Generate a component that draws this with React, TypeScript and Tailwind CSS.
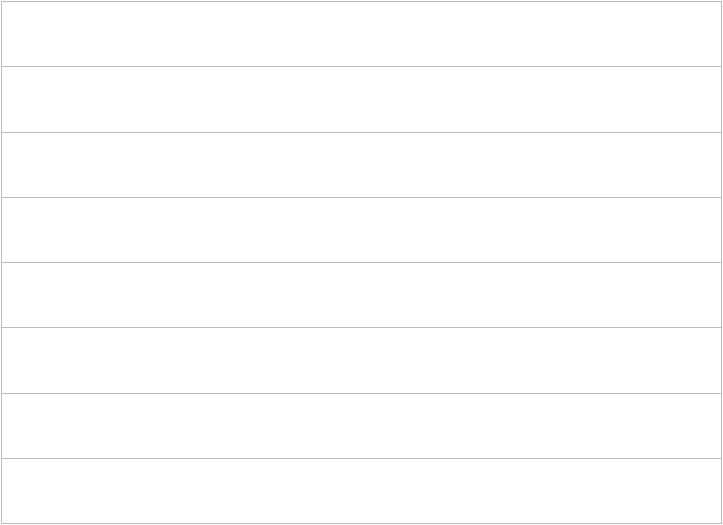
import React from "react";

const rows = Array.from({ length: 8 }, (_, i) => i);

const App: React.FC = () => {
  return (
    <div className="w-[723px] h-[525px] bg-white p-px font-['Liberation_Sans',sans-serif]">
      <div className="flex flex-col w-[721px] h-[523px] border border-[#bdbdbd]">
        {rows.map((i) => (
          <div
            key={i}
            className={`flex-1 ${i < rows.length - 1 ? "border-b border-[#bdbdbd]" : ""}`}
          />
        ))}
      </div>
    </div>
  );
};

export default App;
